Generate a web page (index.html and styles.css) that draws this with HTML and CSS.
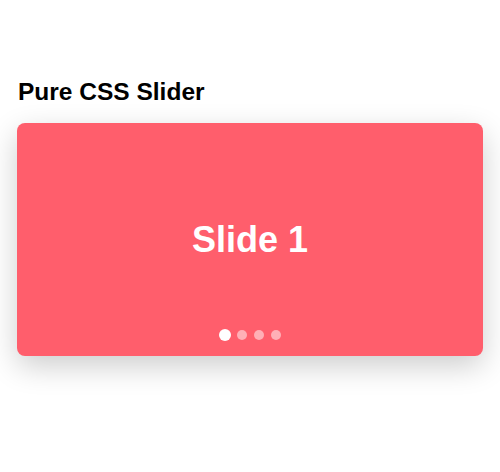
FILE: index.html
```html
<!DOCTYPE html>
<html lang="en">
<head>
    <meta charset="UTF-8">
    <meta name="viewport" content="width=device-width, initial-scale=1.0">
    <title>Pure CSS Slider</title>
    <link rel="stylesheet" href="styles.css">
</head>
<body>

<div class="wrapper">
    <h2>Pure CSS Slider</h2>

    <!-- slider -->
    <div class="slider">
        <div class="slide">Slide 1</div>
        <div class="dots">
            <span class="dot active"></span>
            <span class="dot"></span>
            <span class="dot"></span>
            <span class="dot"></span>
        </div>
    </div>
</div>

</body>
</html>
```

FILE: styles.css
```css
/* general */
body {
    font-family: 'Liberation Sans', Arial, sans-serif;
    margin: 0;
    padding: 0;
    background: #fff;
    color: #000;
    min-height: 100vh;
}

.wrapper {
    padding: 61px 17px 60px;
}

h2 {
    font-size: 24.5px;
    margin: 17px 1px 17px;
}

/* slider box */
.slider {
    position: relative;
    height: 233px;
    border-radius: 8px;
    background-color: #ff5e6c;
    box-shadow: 0 10px 30px rgba(0, 0, 0, 0.2);
    overflow: hidden;
}

.slide {
    height: 100%;
    display: flex;
    align-items: center;
    justify-content: center;
    color: #fff;
    font-size: 36px;
    font-weight: bold;
}

/* navigation dots */
.dots {
    position: absolute;
    left: 0;
    right: 0;
    bottom: 16px;
    display: flex;
    justify-content: center;
    gap: 7px;
}

.dot {
    width: 10px;
    height: 10px;
    border-radius: 50%;
    background: rgba(255, 255, 255, 0.5);
}

.dot.active {
    background: #fff;
    transform: scale(1.2);
}
```
